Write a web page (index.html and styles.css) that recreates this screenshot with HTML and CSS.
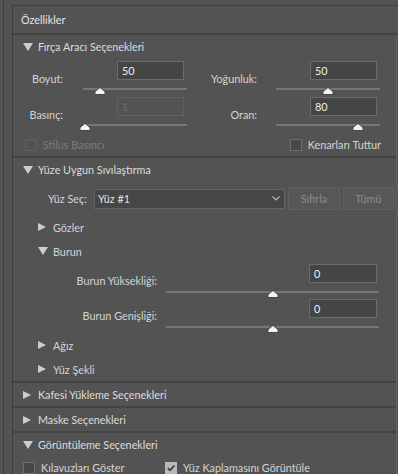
FILE: index.html
```html
<!DOCTYPE html>
<html lang="tr">
<head>
  <meta charset="UTF-8">
  <title>Özellikler</title>
  <link rel="stylesheet" href="styles.css">
</head>
<body>
  <div class="app">
    <div class="dock-edge"></div>
    <div class="panel">
      <div class="title">Özellikler</div>
      <div class="sections">

        <div class="sec">
          <div class="sec-head"><span class="tri down"></span>Fırça Aracı Seçenekleri</div>
          <div class="brush">
            <div class="pair">
              <div class="field">
                <label class="lab-l">Boyut:</label>
                <div class="ctl">
                  <div class="num">50</div>
                  <div class="slider"><span class="thumb" style="left: 16.5%"><svg width="11" height="8" viewBox="0 0 11 8"><polygon points="5.5,0.5 10.5,4.5 10.5,7.5 0.5,7.5 0.5,4.5" fill="#f2f2f2" stroke="#2f2f2f" stroke-width="0.8"/></svg></span></div>
                </div>
              </div>
              <div class="field">
                <label class="lab-r">Yoğunluk:</label>
                <div class="ctl">
                  <div class="num">50</div>
                  <div class="slider"><span class="thumb" style="left: 50%"><svg width="11" height="8" viewBox="0 0 11 8"><polygon points="5.5,0.5 10.5,4.5 10.5,7.5 0.5,7.5 0.5,4.5" fill="#f2f2f2" stroke="#2f2f2f" stroke-width="0.8"/></svg></span></div>
                </div>
              </div>
            </div>
            <div class="pair next">
              <div class="field">
                <label class="lab-l">Basınç:</label>
                <div class="ctl">
                  <div class="num off">1</div>
                  <div class="slider"><span class="thumb" style="left: 2%"><svg width="11" height="8" viewBox="0 0 11 8"><polygon points="5.5,0.5 10.5,4.5 10.5,7.5 0.5,7.5 0.5,4.5" fill="#f2f2f2" stroke="#2f2f2f" stroke-width="0.8"/></svg></span></div>
                </div>
              </div>
              <div class="field">
                <label class="lab-r">Oran:</label>
                <div class="ctl">
                  <div class="num">80</div>
                  <div class="slider"><span class="thumb" style="left: 79%"><svg width="11" height="8" viewBox="0 0 11 8"><polygon points="5.5,0.5 10.5,4.5 10.5,7.5 0.5,7.5 0.5,4.5" fill="#f2f2f2" stroke="#2f2f2f" stroke-width="0.8"/></svg></span></div>
                </div>
              </div>
            </div>
            <div class="checks">
              <div class="check off"><span class="box"></span>Stilus Basıncı</div>
              <div class="check right"><span class="box"></span>Kenarları Tuttur</div>
            </div>
          </div>
        </div>

        <div class="sec">
          <div class="sec-head"><span class="tri down"></span>Yüze Uygun Sıvılaştırma</div>
          <div class="face-row">
            <label>Yüz Seç:</label>
            <div class="select">Yüz #1<svg class="chev" width="8" height="5" viewBox="0 0 8 5"><polyline points="0.5,0.5 4,4 7.5,0.5" fill="none" stroke="#bdbdbd" stroke-width="1.1"/></svg></div>
            <div class="btn">Sıfırla</div>
            <div class="btn narrow">Tümü</div>
          </div>
          <div class="tree-row first"><span class="tri right"></span>Gözler</div>
          <div class="tree-row"><span class="tri down"></span>Burun</div>
          <div class="nose">
            <div class="field">
              <label class="lab-n">Burun Yüksekliği:</label>
              <div class="ctl wide">
                <div class="num">0</div>
                <div class="slider"><span class="thumb" style="left: 50%"><svg width="11" height="8" viewBox="0 0 11 8"><polygon points="5.5,0.5 10.5,4.5 10.5,7.5 0.5,7.5 0.5,4.5" fill="#f2f2f2" stroke="#2f2f2f" stroke-width="0.8"/></svg></span></div>
              </div>
            </div>
            <div class="field next">
              <label class="lab-n">Burun Genişliği:</label>
              <div class="ctl wide">
                <div class="num">0</div>
                <div class="slider"><span class="thumb" style="left: 50%"><svg width="11" height="8" viewBox="0 0 11 8"><polygon points="5.5,0.5 10.5,4.5 10.5,7.5 0.5,7.5 0.5,4.5" fill="#f2f2f2" stroke="#2f2f2f" stroke-width="0.8"/></svg></span></div>
              </div>
            </div>
          </div>
          <div class="tree-row"><span class="tri right"></span>Ağız</div>
          <div class="tree-row"><span class="tri right"></span>Yüz Şekli</div>
        </div>

        <div class="sec">
          <div class="sec-head"><span class="tri right"></span>Kafesi Yükleme Seçenekleri</div>
        </div>

        <div class="sec">
          <div class="sec-head"><span class="tri right"></span>Maske Seçenekleri</div>
        </div>

        <div class="sec last">
          <div class="sec-head"><span class="tri down"></span>Görüntüleme Seçenekleri</div>
          <div class="view-row">
            <div class="check"><span class="box"></span>Kılavuzları Göster</div>
            <div class="check"><span class="box on"><svg width="10" height="10" viewBox="0 0 10 10"><polyline points="1.8,5.2 4,7.3 8.3,2.6" fill="none" stroke="#3a3a3a" stroke-width="1.6"/></svg></span>Yüz Kaplamasını Görüntüle</div>
          </div>
        </div>

      </div>
    </div>
  </div>
</body>
</html>
```

FILE: styles.css
```css
* {
  box-sizing: border-box;
}
body {
  margin: 0;
  width: 398px;
  height: 474px;
  overflow: hidden;
  background: #535353;
  color: #d4d4d4;
  font-family: "Lato", "Liberation Sans", sans-serif;
  font-size: 10.8px;
}
.app {
  display: flex;
  height: 474px;
}
.dock-edge {
  width: 9px;
  margin-left: 3px;
  border-left: 1px solid #3f3f3f;
}
.panel {
  flex: 1;
  display: flex;
  flex-direction: column;
  min-height: 0;
  margin-top: 5px;
  border-top: 1px solid #3f3f3f;
  border-left: 1px solid #3d3d3d;
}
.title {
  height: 29px;
  flex: none;
  display: flex;
  align-items: center;
  padding-left: 8px;
  border-bottom: 2px solid #444;
  color: #e6e6e6;
}
.sections {
  flex: 1;
  min-height: 0;
  overflow: hidden;
  margin-right: 1px;
  border-right: 1px solid #616161;
}
.sec {
  border-bottom: 2px solid #444;
}
.sec.last {
  border-bottom: none;
}
.sec-head {
  height: 23px;
  display: flex;
  align-items: center;
  padding-left: 10px;
  color: #dcdcdc;
}
.tri {
  width: 10px;
  margin-right: 5px;
  display: flex;
}
.tri::before {
  content: "";
  width: 0;
  height: 0;
}
.tri.down::before {
  border-left: 5px solid transparent;
  border-right: 5px solid transparent;
  border-top: 8px solid #cdcdcd;
}
.tri.right::before {
  border-top: 4.5px solid transparent;
  border-bottom: 4.5px solid transparent;
  border-left: 8px solid #cdcdcd;
}

/* brush options */
.brush {
  padding: 3px 0 5px;
}
.pair {
  display: flex;
}
.next {
  margin-top: 2px;
}
.field {
  display: flex;
  align-items: flex-start;
}
.field label {
  text-align: right;
  line-height: 14px;
  padding-top: 11px;
}
.lab-l {
  width: 50px;
  margin-right: 20px;
}
.lab-r {
  width: 70px;
  margin-right: 19px;
}
.ctl {
  width: 104px;
}
.ctl.wide {
  width: 213px;
}
.num {
  margin-left: 34px;
  width: 67px;
  height: 19px;
  padding: 0 4px;
  line-height: 17px;
  background: #454545;
  border: 1px solid #6b6b6b;
  color: #eeeeee;
}
.num.off {
  background: #535353;
  border-color: #606060;
  color: #6e6e6e;
}
.wide .num {
  margin-left: 143px;
  width: 68px;
}
.slider {
  position: relative;
  height: 12px;
  margin-top: 3px;
}
.slider::before {
  content: "";
  position: absolute;
  left: 0;
  right: 0;
  top: 5px;
  height: 2px;
  background: #767676;
}
.thumb {
  position: absolute;
  top: 4px;
  width: 11px;
  height: 8px;
  transform: translateX(-50%);
  display: flex;
}
.checks {
  display: flex;
  margin-top: 8px;
  padding-left: 12px;
}
.check {
  display: flex;
  align-items: center;
  height: 12px;
  line-height: 12px;
}
.check.off {
  color: #7b7b7b;
}
.check.right {
  margin-left: auto;
  margin-right: 15px;
}
.box {
  width: 12px;
  height: 12px;
  margin-right: 6px;
  background: #474747;
  border: 1px solid #6e6e6e;
  display: flex;
  align-items: center;
  justify-content: center;
}
.check.off .box {
  background: #535353;
  border-color: #626262;
}
.box.on {
  background: #b9b9b9;
  border-color: #b9b9b9;
}

/* face-aware liquify */
.face-row {
  display: flex;
  align-items: center;
  height: 23px;
  margin-top: 6px;
  padding-left: 35px;
}
.face-row label {
  margin-right: 7px;
}
.select {
  width: 191px;
  height: 20px;
  display: flex;
  align-items: center;
  padding-left: 3px;
  background: #464646;
  border: 1px solid #636363;
  color: #e2e2e2;
}
.chev {
  margin-left: auto;
  margin-right: 4px;
}
.btn {
  width: 52px;
  height: 23px;
  margin-left: 3px;
  display: flex;
  align-items: center;
  justify-content: center;
  background: #575757;
  border: 1px solid #606060;
  color: #8b8b8b;
}
.btn.narrow {
  width: 51px;
}
.tree-row {
  height: 24px;
  display: flex;
  align-items: center;
  padding-left: 25px;
}
.tree-row.first {
  margin-top: 5px;
}
.nose {
  padding-top: 1px;
}
.nose .next {
  margin-top: 1px;
}
.field .lab-n {
  width: 144px;
  margin-right: 9px;
  padding-top: 10px;
}

/* view options */
.view-row {
  display: grid;
  grid-template-columns: 142px auto;
  margin-top: 5px;
  padding-left: 10px;
}
.view-row .check {
  height: 13px;
}
```
